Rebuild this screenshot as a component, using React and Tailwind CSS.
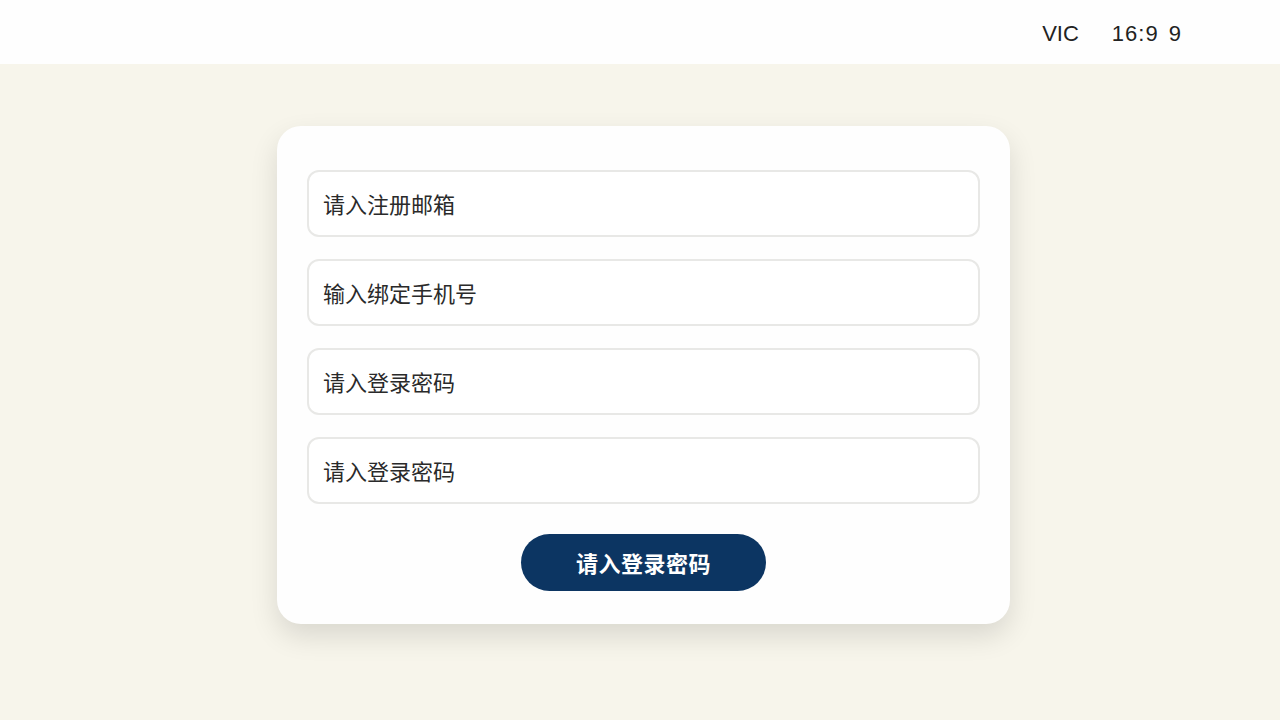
import React from 'react';

const fields = ['请入注册邮箱', '输入绑定手机号', '请入登录密码', '请入登录密码'];

export default function App() {
  return (
    <div
      className="w-[1280px] h-[720px] bg-[#f7f5eb] flex flex-col overflow-hidden"
      style={{ fontFamily: '"Noto Sans CJK SC", "Noto Sans", sans-serif' }}
    >
      {/* top bar */}
      <div className="h-[64px] bg-[#fefefe] flex items-center justify-end pr-[98px] pt-[3px] text-[22px] text-[#222]">
        <span style={{ fontFamily: '"Liberation Sans", Arial, sans-serif' }}>VIC</span>
        <span className="ml-[33px] tracking-[1px] [word-spacing:3px]" style={{ fontFamily: '"Liberation Sans", Arial, sans-serif' }}>16:9 9</span>
      </div>

      <div className="flex-1 flex justify-center pt-[62px] pl-[7px]">
        <div className="w-[733px] h-[498px] bg-[#fefefe] rounded-[24px] shadow-[0_12px_28px_rgba(0,0,0,0.12)] pt-[44px] px-[30px] flex flex-col">
          <div className="flex flex-col gap-[22px]">
            {fields.map((f, i) => (
              <div
                key={i}
                className="h-[67px] rounded-[12px] border-2 border-[#e8e8e6] bg-white flex items-center px-[14px] text-[22px] text-[#2a2a2a]"
              >
                {f}
              </div>
            ))}
          </div>
          <div className="flex justify-center mt-[30px]">
            <button className="w-[245px] h-[57px] rounded-full bg-[#0c3562] text-white text-[22px] font-bold tracking-[0.5px]">
              请入登录密码
            </button>
          </div>
        </div>
      </div>
    </div>
  );
}
